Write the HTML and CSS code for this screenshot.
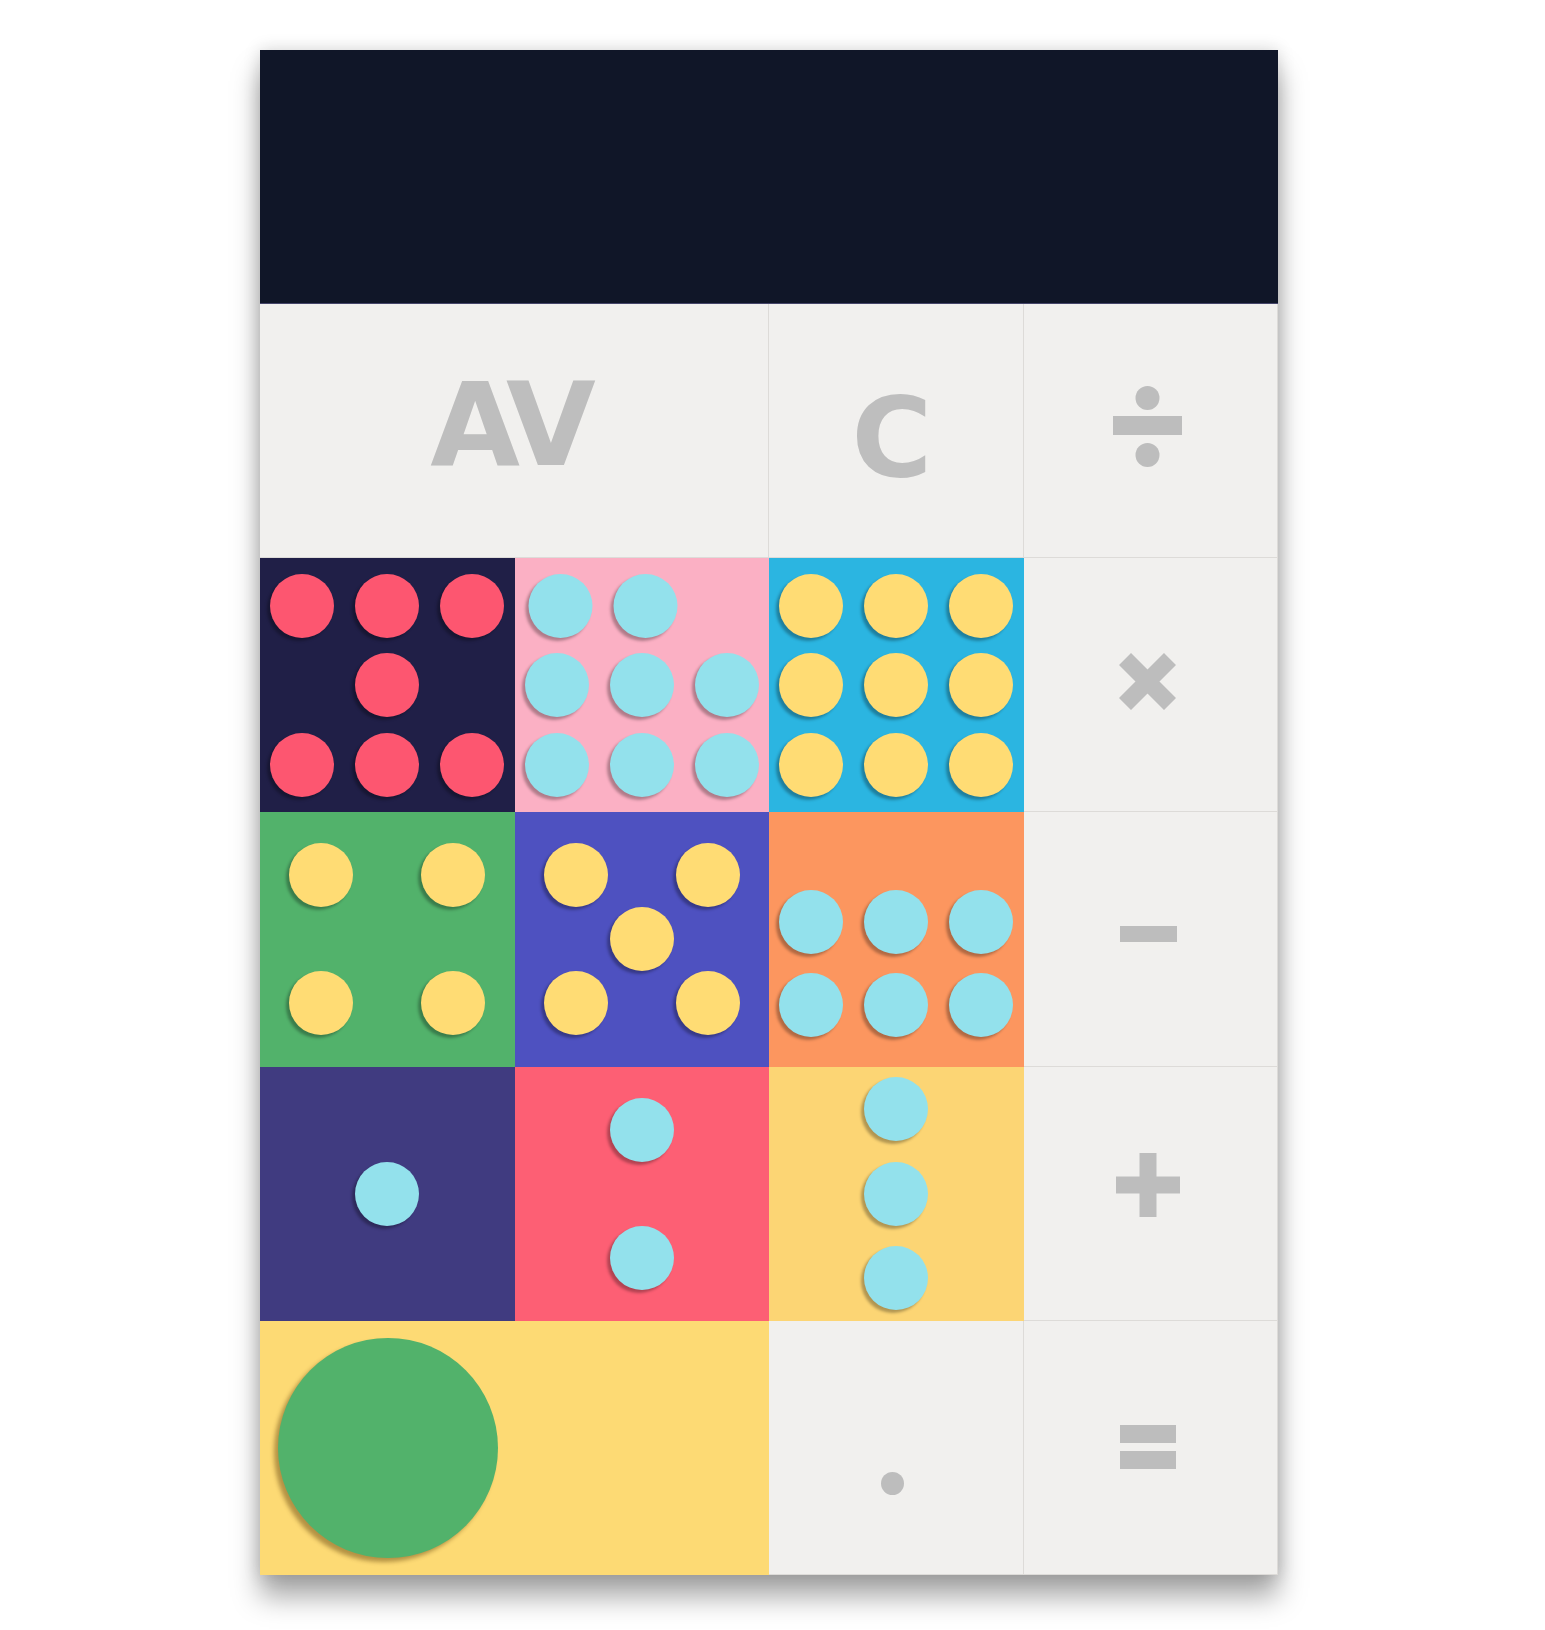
FILE: index.html
```html
<!DOCTYPE html>
<html lang="en">
<head>
<meta charset="utf-8">
<title>Dice Calculator</title>
<link rel="stylesheet" href="styles.css">
</head>
<body>
<div class="page">
<div class="calc">
  <div class="display"></div>
  <div class="keys">
    <div class="key light wide"><span class="txt av">AV</span></div>
    <div class="key light"><span class="txt clr">C</span></div>
    <div class="key light">
      <svg class="op op-div" width="69" height="81" viewBox="0 0 69 81"><circle cx="34.5" cy="12" r="12"/><rect x="0" y="30" width="69" height="19"/><circle cx="34.5" cy="69" r="12"/></svg>
    </div>

    <div class="key die d7">
      <i class="pip red r1 c1"></i><i class="pip red r1 c2"></i><i class="pip red r1 c3"></i>
      <i class="pip red r2 c2"></i>
      <i class="pip red r3 c1"></i><i class="pip red r3 c2"></i><i class="pip red r3 c3"></i>
    </div>
    <div class="key die d8">
      <i class="pip cyan r1 c1 nudge"></i><i class="pip cyan r1 c2 nudge"></i>
      <i class="pip cyan r2 c1"></i><i class="pip cyan r2 c2"></i><i class="pip cyan r2 c3"></i>
      <i class="pip cyan r3 c1"></i><i class="pip cyan r3 c2"></i><i class="pip cyan r3 c3"></i>
    </div>
    <div class="key die d9">
      <i class="pip yel r1 c1"></i><i class="pip yel r1 c2"></i><i class="pip yel r1 c3"></i>
      <i class="pip yel r2 c1"></i><i class="pip yel r2 c2"></i><i class="pip yel r2 c3"></i>
      <i class="pip yel r3 c1"></i><i class="pip yel r3 c2"></i><i class="pip yel r3 c3"></i>
    </div>
    <div class="key light">
      <svg class="op op-mul" width="57" height="57" viewBox="0 0 57 57"><path d="M6 6L51 51M51 6L6 51" stroke-width="17" fill="none"/></svg>
    </div>

    <div class="key die tight d4">
      <i class="pip yel r1 c1"></i><i class="pip yel r1 c3"></i>
      <i class="pip yel r3 c1"></i><i class="pip yel r3 c3"></i>
    </div>
    <div class="key die tight d5">
      <i class="pip yel r1 c1"></i><i class="pip yel r1 c3"></i>
      <i class="pip yel r2 c2"></i>
      <i class="pip yel r3 c1"></i><i class="pip yel r3 c3"></i>
    </div>
    <div class="key die d6">
      <i class="pip cyan r1 c1"></i><i class="pip cyan r1 c2"></i><i class="pip cyan r1 c3"></i>
      <i class="pip cyan r2 c1"></i><i class="pip cyan r2 c2"></i><i class="pip cyan r2 c3"></i>
    </div>
    <div class="key light">
      <svg class="op op-sub" width="57" height="16" viewBox="0 0 57 16"><rect x="0" y="0" width="57" height="16"/></svg>
    </div>

    <div class="key die tight d1">
      <i class="pip cyan r2 c2"></i>
    </div>
    <div class="key die tight d2">
      <i class="pip cyan r1 c2"></i>
      <i class="pip cyan r3 c2"></i>
    </div>
    <div class="key die d3">
      <i class="pip cyan r1 c2"></i>
      <i class="pip cyan r2 c2"></i>
      <i class="pip cyan r3 c2"></i>
    </div>
    <div class="key light">
      <svg class="op op-add" width="64" height="64" viewBox="0 0 64 64"><rect x="23.5" y="0" width="17" height="64"/><rect x="0" y="23.5" width="64" height="17"/></svg>
    </div>

    <div class="key zero wide"><i class="big"></i></div>
    <div class="key light"><i class="dot"></i></div>
    <div class="key light">
      <svg class="op op-eq" width="56" height="44" viewBox="0 0 56 44"><rect x="0" y="0" width="56" height="18"/><rect x="0" y="26" width="56" height="18"/></svg>
    </div>
  </div>
</div>
</div>
</body>
</html>
```

FILE: styles.css
```css
html, body {
  margin: 0;
  padding: 0;
  background: #ffffff;
}

.page {
  min-height: 1630px;
  padding: 50px 0 0 260px;
  box-sizing: border-box;
}

.calc {
  width: 1018px;
  box-shadow: 0 22px 26px rgba(0, 0, 0, 0.34), 0 0 16px rgba(0, 0, 0, 0.16);
}

.display {
  box-sizing: border-box;
  height: 254px;
  background: #101628;
  border-bottom: 1px solid #45456a;
}

.keys {
  display: grid;
  grid-template-columns: repeat(4, 1fr);
  grid-auto-rows: 254.2px;
}

.key {
  position: relative;
  box-sizing: border-box;
  overflow: hidden;
}

.wide {
  grid-column: span 2;
}

.light {
  background: #f1f0ee;
  border-right: 1px solid #dddbd8;
  border-bottom: 1px solid #dddbd8;
  display: flex;
  align-items: center;
  justify-content: center;
  color: #bdbdbd;
}

.txt {
  font-family: "DejaVu Sans", "Liberation Sans", sans-serif;
  font-weight: 700;
  line-height: 1;
  color: #bebebe;
}

.av {
  font-size: 116px;
  letter-spacing: -6px;
  margin: -12px 0 0 -8px;
}

.clr {
  font-size: 110px;
  margin: 14px 0 0 -8px;
}

.op {
  fill: #bdbdbd;
  stroke: #bdbdbd;
}
.op rect, .op circle { stroke: none; }
.op-div { margin: -8px 0 0 -6px; }
.op-mul { margin: -6px 0 0 -5px; }
.op-sub { margin: -9px 0 0 -4px; }
.op-add { margin: -16px 0 0 -4px; }
.op-eq { margin: 0 0 0 -5px; }

.dot {
  width: 23px;
  height: 23px;
  border-radius: 50%;
  background: #bdbdbd;
  margin: 73px 0 0 -6px;
}

/* dice */
.die {
  display: grid;
  grid-template-columns: repeat(3, 64px);
  grid-template-rows: repeat(3, 64px);
  justify-content: space-around;
  align-content: space-evenly;
}

.tight {
  justify-content: center;
  align-content: center;
  column-gap: 2px;
  row-gap: 0;
}

.d7 { background: #201f47; }
.d8 { background: #fbb0c4; }
.d9 { background: #2bb5e1; }
.d4 { background: #52b26b; }
.d5 { background: #4e51c0; }
.d6 {
  background: #fc965f;
  grid-template-rows: repeat(2, 64px);
  row-gap: 19px;
  align-content: end;
  padding-bottom: 30px;
}
.d1 { background: #403b80; }
.d2 { background: #fd5f74; }
.d3 {
  background: #fcd574;
  align-content: space-around;
}

.pip {
  display: block;
  width: 64px;
  height: 64px;
  border-radius: 50%;
  box-shadow: -3px 3px 3px rgba(0, 0, 0, 0.3);
}

.red { background: #fd5670; }
.cyan { background: #93e1ec; }
.yel { background: #ffdc74; }

.r1 { grid-row: 1; }
.r2 { grid-row: 2; }
.r3 { grid-row: 3; }
.c1 { grid-column: 1; }
.c2 { grid-column: 2; }
.c3 { grid-column: 3; }

.nudge { transform: translateX(3.5px); }

.zero {
  background: #fdda74;
  display: flex;
  align-items: center;
}

.big {
  display: block;
  width: 220px;
  height: 220px;
  margin-left: 18px;
  border-radius: 50%;
  background: #52b26b;
  box-shadow: -4px 4px 4px rgba(90, 60, 10, 0.45);
}
```
